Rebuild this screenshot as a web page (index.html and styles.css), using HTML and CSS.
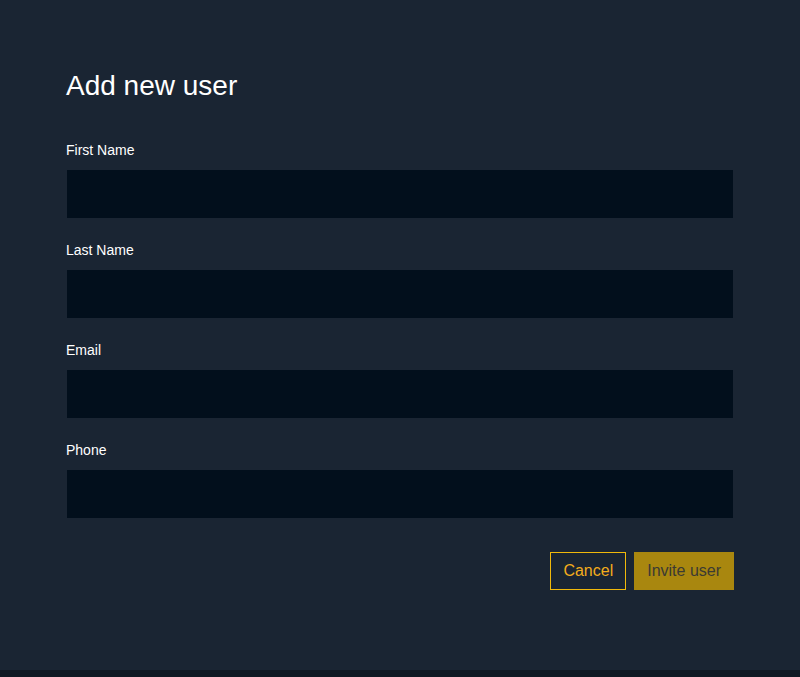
FILE: index.html
```html
<!DOCTYPE html>
<html lang="en">
<head>
    <meta charset="UTF-8">
    <meta name="viewport" content="width=device-width, initial-scale=1.0">
    <title>Add new user</title>
    <link rel="stylesheet" href="styles.css">
</head>
<body>
    <div class="page">
        <form class="user_form">
            <h1>Add new user</h1>
            <div class="field">
                <label for="firstName">First Name</label>
                <input type="text" id="firstName">
            </div>
            <div class="field">
                <label for="lastName">Last Name</label>
                <input type="text" id="lastName">
            </div>
            <div class="field">
                <label for="email">Email</label>
                <input type="email" id="email">
            </div>
            <div class="field">
                <label for="phone">Phone</label>
                <input type="tel" id="phone">
            </div>
            <div class="actions">
                <button type="button" class="btn_cancel">Cancel</button>
                <button type="submit" class="btn_invite">Invite user</button>
            </div>
        </form>
    </div>
    <div class="bottom_bar"></div>
</body>
</html>
```

FILE: styles.css
```css
body {
    margin: 0;
    font-family: "Liberation Sans", Arial, sans-serif;
    background-color: #1a2533;
    color: #fff;
}

.page {
    height: 670px;
    box-sizing: border-box;
    padding: 70px 66px 0;
}

.user_form {
    width: 668px;
}

h1 {
    margin: 0 0 40px;
    font-size: 28px;
    line-height: 32px;
    font-weight: normal;
}

.field {
    margin-bottom: 23px;
}

.field label {
    display: block;
    font-size: 14px;
    line-height: 16px;
    margin-bottom: 11px;
}

.field input {
    display: block;
    width: 100%;
    height: 50px;
    box-sizing: border-box;
    margin: 0;
    padding: 0 12px;
    border: 1px solid transparent;
    background: #020f1c;
    background-clip: padding-box;
    color: #fff;
    font-family: inherit;
    font-size: 14px;
    outline: none;
}

.actions {
    display: flex;
    justify-content: flex-end;
    gap: 8px;
    padding-top: 10px;
}

.actions button {
    height: 38px;
    padding: 0 12px;
    font-family: inherit;
    font-size: 16px;
    border-radius: 0;
    cursor: pointer;
}

.btn_cancel {
    background: transparent;
    border: 1px solid #f0b90b;
    color: #f3ac1c;
}

.btn_invite {
    background: #a9870f;
    border: 1px solid #a9870f;
    color: #3b3a33;
}

.bottom_bar {
    height: 7px;
    background: #0f1923;
}
```
